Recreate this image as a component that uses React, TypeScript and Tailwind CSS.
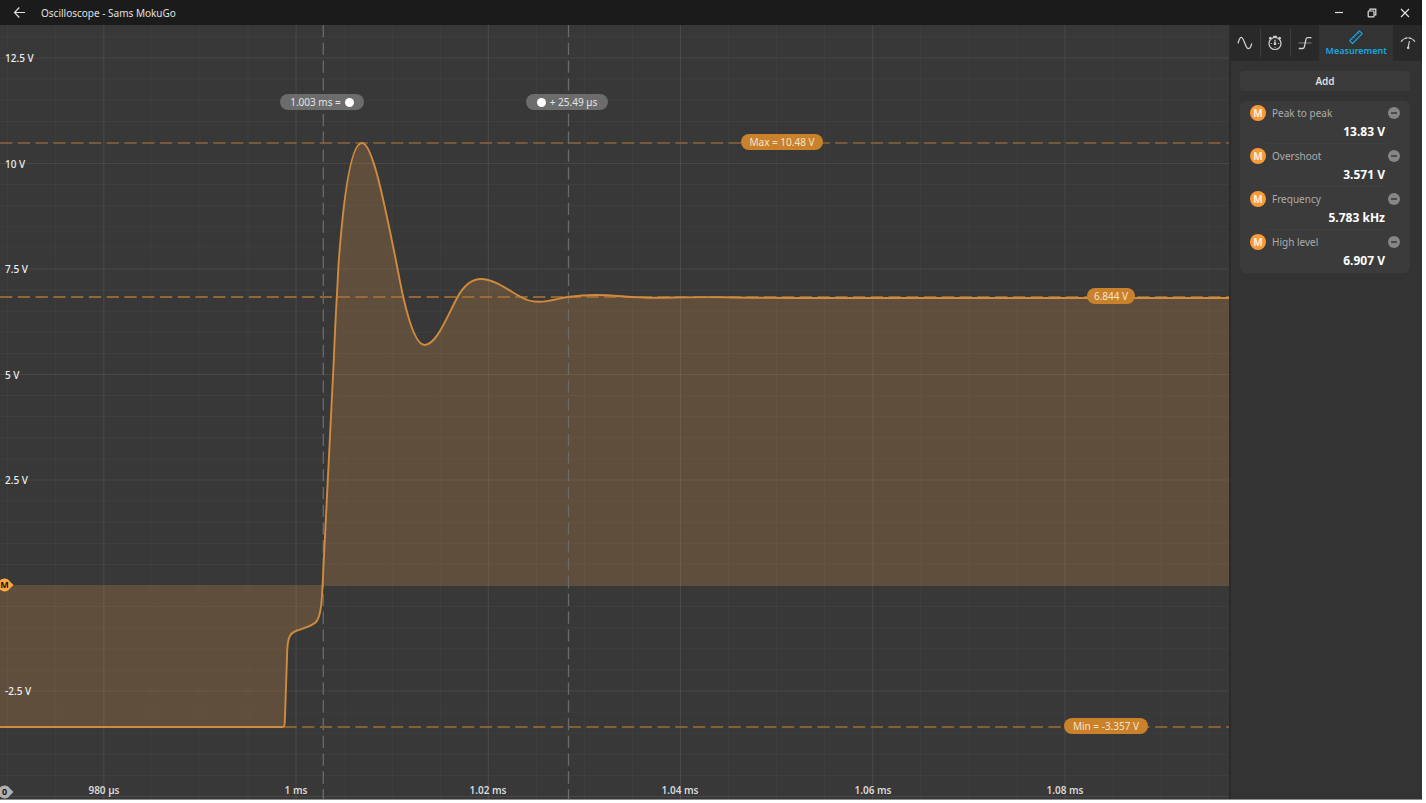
import React from "react";

const VIEW_W = 1229;
const VIEW_H = 774;

const px = (v: number) => `${(v / VIEW_W) * 100}%`;
const py = (v: number) => `${(v / VIEW_H) * 100}%`;

const TRACE =
  "M0 702 H283 Q284.500 702 284.800 697 L287.200 626 C287.800 612 290 608 297 605.500 C306 602.500 312 601 316 597 C321.500 591 322 574 323.300 545 L333.800 335 C335.500 290 337.500 262 338.500 240 C343 178 350 118 362 118 C372 118 383 172 393 221 C398 245 400 258 403.500 273 C409 297 416 320 424.500 320 C436 320 446 294 457 273 C464 260 472 254 481 254 C494 254 508 265 520 271.500 C526 275 532 277 539 276.800 C549 276.500 558 273.500 568 272 C577 270.700 586 270 596 270 C615 270 632 273 655 272.800 C680 272.500 700 271.800 725 272.300 C760 273 790 273 830 273 H1229";

const voltTicks = [
  { label: "12.5 V", y: 33 },
  { label: "10 V", y: 139 },
  { label: "7.5 V", y: 244 },
  { label: "5 V", y: 350 },
  { label: "2.5 V", y: 455 },
  { label: "-2.5 V", y: 666 },
];

const timeTicks = [
  { label: "980 µs", x: 104 },
  { label: "1 ms", x: 296 },
  { label: "1.02 ms", x: 488 },
  { label: "1.04 ms", x: 680 },
  { label: "1.06 ms", x: 873 },
  { label: "1.08 ms", x: 1065 },
];

const columns = Array.from({ length: 26 }, (_, i) => ({
  x: 7.7 + i * 48.06,
  major: i % 4 === 2,
}));

const rows = Array.from({ length: 37 }, (_, i) => ({
  y: 11.9 + i * 21.1,
  major: i % 5 === 1,
}));

const measurements = [
  { name: "Peak to peak", value: "13.83 V" },
  { name: "Overshoot", value: "3.571 V" },
  { name: "Frequency", value: "5.783 kHz" },
  { name: "High level", value: "6.907 V" },
];

function Marker({ label, y, color }: { label: string; y: number; color: string }) {
  return (
    <svg
      className="absolute left-0 -translate-y-1/2"
      style={{ top: py(y) }}
      width="14"
      height="14"
      viewBox="0 0 14 14"
    >
      <path d="M4.500 .5 C7 .5 8.500 1.500 9.700 3.300 L13.500 7 L9.700 10.700 C8.500 12.500 7 13.500 4.500 13.500 C1 13.500 -2 10.500 -2 7 C-2 3.500 1 .5 4.500 .5Z" fill={color} />
      <text x="4.500" y="10.200" textAnchor="middle" fontSize="9" fontWeight="700" fill="#1c1710">
        {label}
      </text>
    </svg>
  );
}

function Pill({ x, y, className, children }: { x: number; y: number; className: string; children: React.ReactNode }) {
  return (
    <div
      className={`absolute flex h-4 -translate-x-1/2 -translate-y-1/2 items-center justify-center gap-1 rounded-full text-[10px] whitespace-nowrap ${className}`}
      style={{ left: px(x), top: py(y) }}
    >
      {children}
    </div>
  );
}

function Dot() {
  return <span className="size-[9px] rounded-full bg-white" />;
}

function Plot() {
  return (
    <main className="relative min-w-0 flex-1 overflow-hidden bg-[#383838]">
      <svg
        className="absolute inset-0 size-full"
        viewBox={`0 0 ${VIEW_W} ${VIEW_H}`}
        preserveAspectRatio="none"
        aria-label="Waveform"
      >
        {columns.map((c) => (
          <path key={c.x} d={`M${c.x} 0V774`} stroke="#fff" strokeOpacity={c.major ? 0.09 : 0.035} />
        ))}
        {rows.map((r) => (
          <path key={r.y} d={`M0 ${r.y}H1229`} stroke="#fff" strokeOpacity={r.major ? 0.08 : 0.035} />
        ))}
        <path d={`${TRACE} V560.500 H0 Z`} fill="#de964a" fillOpacity="0.24" />
        <g fill="none" strokeDasharray="12.300 5.470">
          <path d="M0 118H1229" stroke="#8c6438" strokeWidth="1.500" />
          <path d="M0 272H1229" stroke="#b07535" strokeWidth="1.500" />
          <path d="M0 702H1229" stroke="#a06d33" strokeWidth="1.500" />
          <path d="M323.300 0V774" stroke="#6a6a6a" strokeWidth="1.300" />
          <path d="M568.500 0V774" stroke="#6a6a6a" strokeWidth="1.300" />
        </g>
        <path d={TRACE} fill="none" stroke="#d08b3e" strokeWidth="1.900" strokeLinejoin="round" />
      </svg>

      {voltTicks.map((t) => (
        <span
          key={t.label}
          className="absolute left-[5px] -translate-y-1/2 text-[10px] font-medium text-[#eeeeee]"
          style={{ top: py(t.y) }}
        >
          {t.label}
        </span>
      ))}
      {timeTicks.map((t) => (
        <span
          key={t.label}
          className="absolute bottom-px -translate-x-1/2 text-[10px] font-semibold text-[#d8d8d8]"
          style={{ left: px(t.x) }}
        >
          {t.label}
        </span>
      ))}

      <Pill x={322} y={77} className="w-[84px] bg-[#6c6c6c] text-[#e4e4e4]">
        1.003 ms = <Dot />
      </Pill>
      <Pill x={567} y={77} className="w-[82px] bg-[#6c6c6c] text-[#e4e4e4]">
        <Dot /> + 25.49 µs
      </Pill>
      <Pill x={782} y={117} className="w-[82px] bg-[#ca812b] text-[#f7e3c8]">
        Max = 10.48 V
      </Pill>
      <Pill x={1111} y={271} className="w-[48px] bg-[#ca812b] text-[#f7e3c8]">
        6.844 V
      </Pill>
      <Pill x={1106} y={701} className="w-[84px] bg-[#ca812b] text-[#f7e3c8]">
        Min = -3.357 V
      </Pill>

      <Marker label="M" y={560} color="#ffa63f" />
      <Marker label="0" y={767} color="#b0b0b0" />
    </main>
  );
}

const tabButton = "flex flex-1 items-center justify-center";

function Tabs() {
  return (
    <nav className="flex h-9 bg-[#292929] text-[#d0d0d0]">
      <button className={tabButton} aria-label="Channels">
        <svg width="16" height="16" viewBox="0 0 16 16" fill="none" stroke="currentColor" strokeWidth="1.300" strokeLinecap="round">
          <path d="M1.200 7.800 C2 4.500 3 2.300 4.300 2.300 C7 2.300 8.500 13.700 11.300 13.700 C12.800 13.700 14 11.500 14.600 8.800" />
        </svg>
      </button>
      <div className="my-1 w-px bg-[#3c3c3c]" />
      <button className={tabButton} aria-label="Timebase">
        <svg width="16" height="16" viewBox="0 0 16 16" fill="none" stroke="currentColor" strokeWidth="1.200" strokeLinecap="round">
          <circle cx="8" cy="8.500" r="6" />
          <path d="M8 9V5" />
          <path d="M6.900 1.800H9.100M2.900 3.300L3.500 2.700M13.100 3.300L12.500 2.700" strokeWidth="2" />
          <circle cx="8" cy="8.800" r=".8" fill="currentColor" />
          <path d="M4.200 8.500h.3M11.500 8.500h.3M8 12.200v.2" strokeWidth=".9" />
        </svg>
      </button>
      <div className="my-1 w-px bg-[#3c3c3c]" />
      <button className={tabButton} aria-label="Trigger">
        <svg width="16" height="16" viewBox="0 0 16 16" fill="none" stroke="currentColor" strokeWidth="1.300">
          <path d="M1.800 13.500H5.500C6.700 13.500 7 13 7.300 12L9 4.200C9.200 3.200 9.600 2.700 10.700 2.700H14.500" strokeLinejoin="round" />
          <path d="M1.500 8H14.500" strokeWidth=".9" strokeOpacity=".6" />
        </svg>
      </button>
      <button className="flex w-[74px] flex-col items-center bg-[#333333] pt-1 text-[9px] leading-3 font-semibold text-[#1aa7df]">
        <svg width="16" height="16" viewBox="0 0 16 16" fill="none" stroke="currentColor" strokeWidth="1.200">
          <path d="M1.600 11.600 L11.400 1.800 L14.300 4.700 L4.500 14.500Z" strokeLinejoin="round" />
          <path d="M3.700 9.500l1 1M5.700 7.500l1.500 1.500M7.700 5.500l1 1M9.700 3.500l1.500 1.500" strokeWidth=".8" />
        </svg>
        Measurement
      </button>
      <button className={tabButton} aria-label="Calibration">
        <svg width="16" height="16" viewBox="0 0 16 16" fill="none" stroke="currentColor" strokeWidth="1.200" strokeLinecap="round">
          <path d="M1.300 6.300 C5 1.700 11 1.700 14.700 6.300" strokeDasharray="2.600 1.700" />
          <path d="M9.300 6.500L8.200 12.500" />
          <circle cx="8.200" cy="12.800" r=".7" fill="currentColor" />
        </svg>
      </button>
    </nav>
  );
}

function Sidebar() {
  return (
    <aside className="w-[193px] shrink-0 border-l-2 border-[#2b2b2b] bg-[#333333]">
      <Tabs />
      <div className="flex flex-col gap-2.5 py-2.5 pr-3 pl-[9px]">
        <button className="h-5 rounded-sm bg-[#3b3b3b] text-[10px] font-semibold text-[#dedede]">Add</button>
        <ul className="rounded-md bg-[#3b3b3b] px-2.5">
          {measurements.map((m, i) => (
            <li key={m.name} className="flex h-[43px] flex-col pt-1">
              <div className="flex h-4 items-center">
                <span className="flex size-4 items-center justify-center rounded-full bg-[#f79b38] text-[10px] font-bold text-[#fff1dc]">
                  M
                </span>
                <span className="ml-1.5 flex-1 text-[10px] text-[#ababab]">{m.name}</span>
                <button
                  className="flex size-3 items-center justify-center rounded-full bg-[#868686]"
                  aria-label={`Remove ${m.name}`}
                >
                  <span className="h-0.5 w-1.5 bg-[#4b4b4b]" />
                </button>
              </div>
              <div className="mt-px h-5 pr-[15px] text-right text-[12px] leading-5 font-bold text-white">{m.value}</div>
              {i < 3 && <div className="mt-px mr-3 ml-4 h-px bg-[#404040]" />}
            </li>
          ))}
        </ul>
      </div>
    </aside>
  );
}

function TitleBar() {
  return (
    <header className="flex h-[25px] shrink-0 items-center bg-[#1b1b1b] text-[#e0e0e0]">
      <button className="ml-[13px]" aria-label="Back">
        <svg width="13" height="13" viewBox="0 0 13 13" fill="none" stroke="currentColor" strokeWidth="1.200">
          <path d="M12 6.500H1.500M6.300 1.500L1.500 6.500L6.300 11.500" />
        </svg>
      </button>
      <h1 className="ml-[15px] flex-1 pt-px text-[10px]">Oscilloscope - Sams MokuGo</h1>
      <div className="mr-3 flex items-center gap-[23px]">
        <button aria-label="Minimize">
          <svg width="10" height="10" viewBox="0 0 10 10" stroke="currentColor" strokeWidth="1.200">
            <path d="M1 4.500H9" />
          </svg>
        </button>
        <button aria-label="Restore">
          <svg width="10" height="10" viewBox="0 0 10 10" fill="none" stroke="currentColor" strokeWidth="1.200">
            <rect x="1.200" y="3" width="5.800" height="5.800" rx=".6" />
            <path d="M3 2.800V1.200H8.800V7H7.200" />
          </svg>
        </button>
        <button aria-label="Close">
          <svg width="10" height="10" viewBox="0 0 10 10" stroke="currentColor" strokeWidth="1.200">
            <path d="M1 1L9 9M9 1L1 9" />
          </svg>
        </button>
      </div>
    </header>
  );
}

export default function App() {
  return (
    <div className="h-screen bg-white pr-1 pb-[3px] font-['Noto_Sans','Open_Sans',sans-serif]">
      <div className="flex h-full flex-col border-b border-[#8c8c8c] bg-[#333333]">
        <TitleBar />
        <div className="flex min-h-0 flex-1">
          <Plot />
          <Sidebar />
        </div>
      </div>
    </div>
  );
}
